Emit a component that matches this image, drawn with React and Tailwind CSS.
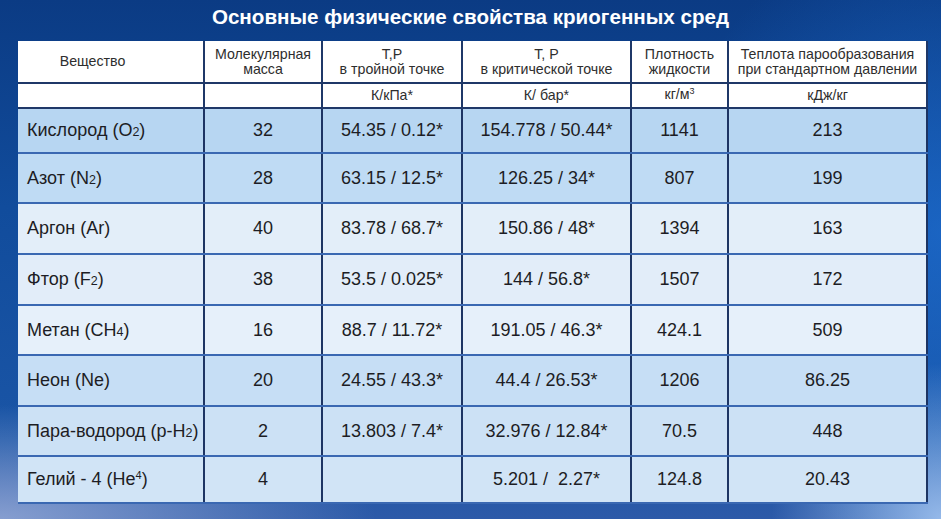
const Sub = ({ children }) => <span className="text-[12.5px]">{children}</span>
const Sup = ({ children }) => <span className="relative -top-[6px] text-[11px]">{children}</span>

const rows = [
  { name: <>Кислород (O<Sub>2</Sub>)</>, m: '32', tr: '54.35 / 0.12*', cr: '154.778 / 50.44*', d: '1141', q: '213', h: 'h-[45px]', bg: 'bg-[#b7d6f2]' },
  { name: <>Азот (N<Sub>2</Sub>)</>, m: '28', tr: '63.15 / 12.5*', cr: '126.25 / 34*', d: '807', q: '199', h: 'h-[50px]', bg: 'bg-[#bfdbf4]' },
  { name: 'Аргон (Ar)', m: '40', tr: '83.78 / 68.7*', cr: '150.86 / 48*', d: '1394', q: '163', h: 'h-[51px]', bg: 'bg-[#e3eef9]' },
  { name: <>Фтор (F<Sub>2</Sub>)</>, m: '38', tr: '53.5 / 0.025*', cr: '144 / 56.8*', d: '1507', q: '172', h: 'h-[51px]', bg: 'bg-[#e2edf9]' },
  { name: <>Метан (CH<Sub>4</Sub>)</>, m: '16', tr: '88.7 / 11.72*', cr: '191.05 / 46.3*', d: '424.1', q: '509', h: 'h-[50px]', bg: 'bg-[#e6f0fa]' },
  { name: 'Неон (Ne)', m: '20', tr: '24.55 / 43.3*', cr: '44.4 / 26.53*', d: '1206', q: '86.25', h: 'h-[51px]', bg: 'bg-[#c6def5]' },
  { name: <>Пара-водород (p-H<Sub>2</Sub>)</>, m: '2', tr: '13.803 / 7.4*', cr: '32.976 / 12.84*', d: '70.5', q: '448', h: 'h-[50px]', bg: 'bg-[#cce1f5]' },
  { name: <>Гелий - 4 (He<Sup>4</Sup>)</>, m: '4', tr: '', cr: '5.201 /  2.27*', d: '124.8', q: '20.43', h: 'h-[47px]', bg: 'bg-[#d1e4f6]' },
]

const App = () => {
  const hd = 'border-b-2 border-r-2 border-[#1f3868] text-center text-[14.2px] leading-[15px] text-[#2e2e2e] font-normal'
  const cell = 'border-b-2 border-r-2 border-b-[#3a68b2] border-r-[#1d3463] text-center text-[18px] text-[#1d1d24]'

  return (
    <div className="w-[941px] h-[519px] overflow-hidden font-['Liberation_Sans',Arial,sans-serif] bg-[radial-gradient(ellipse_40%_22%_at_0%_100%,rgba(150,170,215,0.85),transparent),radial-gradient(ellipse_18%_30%_at_100%_100%,rgba(160,195,240,0.9),transparent),radial-gradient(ellipse_30%_60%_at_100%_45%,rgba(30,110,210,0.7),transparent),linear-gradient(180deg,#0b3b84_0%,#114c9c_40%,#1a55a6_85%,#2d5aa8_100%)]">
      <h1 className="h-[41px] pt-[4px] text-center text-[20.6px] font-bold text-white leading-[26px]">
        Основные физические свойства криогенных сред
      </h1>
      <table className="ml-[18px] w-[909px] table-fixed border-collapse">
        <colgroup>
          <col className="w-[186px]" />
          <col className="w-[118px]" />
          <col className="w-[140px]" />
          <col className="w-[169px]" />
          <col className="w-[97px]" />
          <col className="w-[199px]" />
        </colgroup>
        <thead className="bg-white">
          <tr className="h-[42px]">
            <th className={`${hd} pr-[36px]`}>Вещество</th>
            <th className={hd}>Молекулярная<br />масса</th>
            <th className={hd}>Т,Р<br />в тройной точке</th>
            <th className={hd}>Т, Р<br />в критической точке</th>
            <th className={hd}>Плотность<br />жидкости</th>
            <th className={`${hd} border-r-0`}>Теплота парообразования<br />при стандартном давлении</th>
          </tr>
          <tr className="h-[25px]">
            <th className={hd}></th>
            <th className={hd}></th>
            <th className={hd}>К/кПа*</th>
            <th className={hd}>К/ бар*</th>
            <th className={hd}>кг/м<span className="relative -top-[5px] text-[9px]">3</span></th>
            <th className={`${hd} border-r-0`}>кДж/кг</th>
          </tr>
        </thead>
        <tbody>
          {rows.map((r, i) => {
            const last = i === rows.length - 1 ? 'border-b-0' : ''
            return (
              <tr key={i} className={`${r.h} ${r.bg}`}>
                <td className={`${cell} ${last} text-left pl-[9px] whitespace-nowrap`}>{r.name}</td>
                <td className={`${cell} ${last}`}>{r.m}</td>
                <td className={`${cell} ${last}`}>{r.tr}</td>
                <td className={`${cell} ${last} whitespace-pre`}>{r.cr}</td>
                <td className={`${cell} ${last}`}>{r.d}</td>
                <td className={`${cell} ${last} border-r-0`}>{r.q}</td>
              </tr>
            )
          })}
        </tbody>
      </table>
    </div>
  )
}

export default App
